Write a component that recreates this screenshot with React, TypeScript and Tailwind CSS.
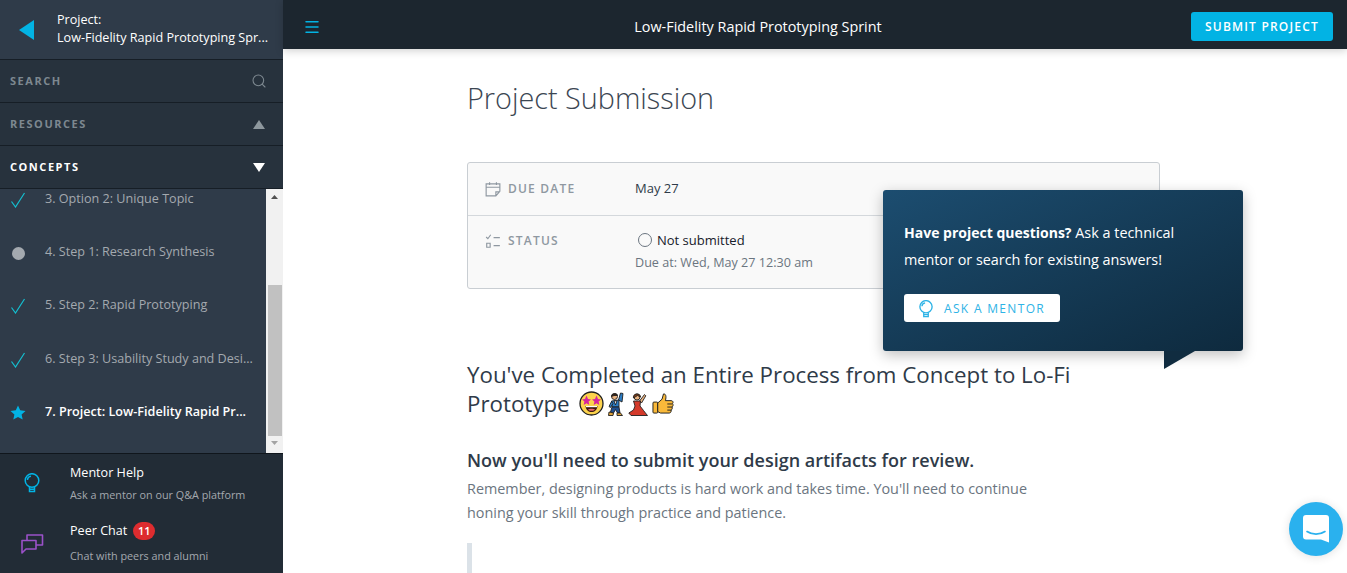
import { Menu, Search } from 'lucide-react';

const font = "font-['Open_Sans',sans-serif]";

const Check = () => (
	<svg width="16" height="16" viewBox="0 0 16 16" fill="none" stroke="#14bfd0" strokeWidth="1.2">
		<path d="M1.5 9.5 L5.5 15 L14.5 1" />
	</svg>
);

const Bulb = ({ color, size }: { color: string; size: number }) => (
	<svg width={size} height={size} viewBox="0 0 20 20" fill="none" stroke={color} strokeWidth="1.5">
		<circle cx="10" cy="7.5" r="6.8" />
		<path d="M7.5 14 V18.5 H12.5 V14 M7.5 16.2 H12.5 M5.5 7 C5.5 5 7 3.5 9 3.2" />
	</svg>
);

const ChatIcon = () => (
	<svg width="24" height="22" viewBox="0 0 24 22" fill="none" stroke="#9b51c9" strokeWidth="1.6" strokeLinejoin="round">
		<path d="M2 7.5 H16 V16 H6 L2 20 Z" />
		<path d="M7 7.5 V2 H22.5 V12 H16" />
	</svg>
);

const Lessons = [
	{ label: '3. Option 2: Unique Topic', state: 'done' },
	{ label: '4. Step 1: Research Synthesis', state: 'open' },
	{ label: '5. Step 2: Rapid Prototyping', state: 'done' },
	{ label: '6. Step 3: Usability Study and Desi...', state: 'done' },
	{ label: '7. Project: Low-Fidelity Rapid Pr...', state: 'current' },
];

const StarEyes = () => (
	<svg width="25" height="25" viewBox="0 0 25 25">
		<circle cx="12.5" cy="12.5" r="11.5" fill="#fcd34d" stroke="#1f1f1f" strokeWidth="1.3" />
		<path d="M7.5 4.5 L9 8 L12 8.6 L9.6 10.6 L10.3 14 L7.5 12.2 L4.7 14 L5.4 10.6 L3 8.6 L6 8 Z" fill="#d6249f" />
		<path d="M17.5 4.5 L19 8 L22 8.6 L19.6 10.6 L20.3 14 L17.5 12.2 L14.7 14 L15.4 10.6 L13 8.6 L16 8 Z" fill="#d6249f" />
		<path d="M6.5 15 H18.5 C18 19 15.5 21 12.5 21 C9.5 21 7 19 6.5 15 Z" fill="#3b1a10" />
		<path d="M9 18.5 C10.5 17.5 14.5 17.5 16 18.5 C15 20.3 10 20.3 9 18.5 Z" fill="#f06a6a" />
		<path d="M7 15 H18 V16.2 H7 Z" fill="#fff" />
	</svg>
);

const ManDancing = () => (
	<svg width="16" height="24" viewBox="0 0 16 24" stroke="#1f1f1f" strokeWidth="0.9">
		<path d="M10.5 8 L12.5 1 L15 1.5 L14 10 Z" fill="#2b7cc4" />
		<path d="M3.5 9 L11 8 L11 15 L4 15 Z" fill="#2b7cc4" />
		<path d="M6 9 L9 8.8 L7.5 13 Z" fill="#fff" />
		<circle cx="6.5" cy="4.5" r="3" fill="#e9b27f" />
		<path d="M3.5 4.5 C3.5 1 9.5 1 9.5 3.5 L6 3.5 Z" fill="#3b2314" />
		<path d="M3.5 9.5 L1 14.5 L2.5 15.5 L5 11.5 Z" fill="#2b7cc4" />
		<path d="M4 15 L11 15 L12 21 L9.5 21 L7.5 17.5 L5.5 21 L2.5 20 Z" fill="#1f4f8f" />
		<path d="M1 20 L5.5 21 L5 23.5 L0.5 23.5 Z" fill="#e0a33a" />
		<path d="M9 21 L12.5 21 L14.5 23.5 L9 23.5 Z" fill="#e0a33a" />
	</svg>
);

const WomanDancing = () => (
	<svg width="20" height="24" viewBox="0 0 20 24" stroke="#1f1f1f" strokeWidth="0.9">
		<circle cx="9" cy="5" r="3" fill="#e9b27f" />
		<path d="M5.5 6 C4.5 1 12.5 0.5 12.5 5 L9.5 3.5 Z" fill="#7a3b16" />
		<path d="M11.5 9 L16.5 2.5 L17.8 3.8 L13.5 11 Z" fill="#e9b27f" />
		<path d="M5.5 9 H12.5 L12 14 C14.5 17 16.5 20 19.5 23.5 H3 L0.8 21 L5.5 18 L7 14 Z" fill="#d43a2a" />
	</svg>
);

const ThumbsUp = () => (
	<svg width="22" height="23" viewBox="0 0 23 23" stroke="#1f1f1f" strokeWidth="1">
		<rect x="1" y="10" width="5" height="11.5" rx="1" fill="#f9b93a" />
		<path d="M6 11 L10.5 7 L12 1.5 C14.5 1.2 15.2 4 14 8.5 H20 C22 8.5 22.5 10.5 21.5 11.5 C22.5 13 22 14.5 21 15 C21.5 16.5 21 18 20 18.3 C20.3 20 19.5 21.5 18 21.5 H9 L6 20 Z" fill="#f9b93a" />
		<path d="M16 12 H21 M16 15.2 H21 M16 18.4 H20" fill="none" />
	</svg>
);

export default function App() {
	return (
		<div className={`${font} relative flex h-[573px] w-[1347px] overflow-hidden bg-white`}>
			<aside className="flex w-[283px] shrink-0 flex-col bg-[#27323d]">
				<div className="flex h-[60px] shrink-0 items-center border-b border-[#161e26] bg-[#2f3b49]">
					<svg className="ml-[19px] shrink-0" width="15" height="20" viewBox="0 0 15 20">
						<path d="M15 0 V20 L0 10 Z" fill="#02b3e4" />
					</svg>
					<div className="ml-[23px] pb-[1px] text-[12.6px] leading-[18px] whitespace-nowrap text-white">
						<div>Project:</div>
						<div>Low-Fidelity Rapid Prototyping Spr...</div>
					</div>
				</div>
				<div className="flex h-[43px] shrink-0 items-center justify-between border-b border-[#161e26] pl-[10px] pr-[16px]">
					<span className="text-[11px] font-bold tracking-[0.14em] text-[#7d8890]">SEARCH</span>
					<Search className="h-[16px] w-[16px] text-[#7d8890]" strokeWidth={1.6} />
				</div>
				<div className="flex h-[43px] shrink-0 items-center justify-between border-b border-[#161e26] pl-[10px] pr-[18px]">
					<span className="text-[11px] font-bold tracking-[0.14em] text-[#7d8890]">RESOURCES</span>
					<svg width="12" height="9" viewBox="0 0 12 9"><path d="M6 0 L12 9 H0 Z" fill="#8d979d" /></svg>
				</div>
				<div className="flex h-[43px] shrink-0 items-center justify-between border-b border-[#161e26] pl-[10px] pr-[18px]">
					<span className="text-[11px] font-bold tracking-[0.14em] text-white">CONCEPTS</span>
					<svg width="12" height="9" viewBox="0 0 12 9"><path d="M0 0 H12 L6 9 Z" fill="#fff" /></svg>
				</div>
				<div className="flex h-[265px] shrink-0 border-b border-[#10161c] bg-[#2f3b49]">
					<ul className="w-[266px] overflow-hidden">
						{Lessons.map((l) => (
							<li key={l.label} className="flex h-[53.2px] items-start">
								<span className="flex h-[22px] w-[45px] shrink-0 items-center justify-center pr-[9px]">
									{l.state === 'done' && <Check />}
									{l.state === 'open' && <span className="h-[13px] w-[13px] rounded-full bg-[#a4a9af]" />}
									{l.state === 'current' && (
										<svg width="16" height="15" viewBox="0 0 16 15">
											<path d="M8 0.5 L10.2 5.3 L15.5 5.9 L11.6 9.4 L12.7 14.6 L8 12 L3.3 14.6 L4.4 9.4 L0.5 5.9 L5.8 5.3 Z" fill="#02b3e4" />
										</svg>
									)}
								</span>
								<span
									className={
										l.state === 'current'
											? 'text-[12.6px] leading-[20px] font-semibold text-white'
											: 'text-[12.6px] leading-[20px] text-[#a4a9af]'
									}
								>
									{l.label}
								</span>
							</li>
						))}
					</ul>
					<div className="flex w-[17px] flex-col items-center bg-[#f1f1f1]">
						<svg className="mt-[6px]" width="7" height="4" viewBox="0 0 7 4"><path d="M3.5 0 L7 4 H0 Z" fill="#505050" /></svg>
						<div className="mt-[86px] h-[151px] w-[14px] bg-[#c1c1c1]" />
						<svg className="mt-[5px]" width="7" height="4" viewBox="0 0 7 4"><path d="M0 0 H7 L3.5 4 Z" fill="#a3a3a3" /></svg>
					</div>
				</div>
				<div className="flex flex-1 flex-col bg-[#222c36]">
					<div className="flex h-[58px] shrink-0">
						<span className="flex w-[70px] shrink-0 items-start justify-center pt-[19px] pr-[6px]">
							<Bulb color="#02b3e4" size={20} />
						</span>
						<div className="pt-[9px]">
							<div className="text-[12.6px] leading-[20px] text-white">Mentor Help</div>
							<div className="mt-[3px] text-[10.8px] leading-[18px] text-[#a4a9af]">Ask a mentor on our Q&amp;A platform</div>
						</div>
					</div>
					<div className="flex flex-1">
						<span className="flex w-[70px] shrink-0 items-start justify-center pt-[21px] pr-[6px]">
							<ChatIcon />
						</span>
						<div className="pt-[9px]">
							<div className="flex items-center gap-[6px] text-[12.6px] leading-[20px] text-white">
								Peer Chat
								<span className="flex h-[18px] w-[22px] items-center justify-center rounded-full bg-[#dd2c2f] text-[11px] font-semibold">11</span>
							</div>
							<div className="mt-[6px] text-[10.8px] leading-[18px] text-[#a4a9af]">Chat with peers and alumni</div>
						</div>
					</div>
				</div>
			</aside>

			<div className="flex min-w-0 flex-1 flex-col">
				<header className="relative z-10 flex h-[49px] shrink-0 items-center bg-[#1c262f] pt-[4px] pl-[20px] pr-[14px] shadow-[0_2px_8px_rgba(0,0,0,0.18)]">
					<Menu className="h-[18px] w-[18px] text-[#02b3e4]" strokeWidth={2} />
					<div className="flex-1 pl-[4px] text-center text-[14.4px] font-medium text-white">
						Low-Fidelity Rapid Prototyping Sprint
					</div>
					<button className="h-[29px] w-[142px] rounded-[3px] bg-[#02b3e4] text-[12px] font-semibold tracking-[0.1em] text-white">
						SUBMIT PROJECT
					</button>
				</header>
				<main className="relative flex-1 overflow-hidden pl-[184px]">
					<div className="w-[693px]">
						<h1 className="mt-[29px] text-[28.8px] leading-[40px] font-light text-[#3b4652]">Project Submission</h1>
						<div className="mt-[44px] rounded-[3px] border border-[#c9ced3] bg-[#f9f9f9]">
							<div className="flex h-[53px] items-center border-b border-[#d4d8dc]">
								<svg className="ml-[17px]" width="16" height="16" viewBox="0 0 14 14" fill="none" stroke="#8f98a1" strokeWidth="1">
									<path d="M1 2.5 H13 V9 L9.5 13 H1 Z M1 5.5 H13 M4 1 V3.5 M10 1 V3.5 M9.5 13 V9.5 H13" />
								</svg>
								<span className="ml-[7px] w-[127px] text-[12px] font-semibold tracking-[0.1em] text-[#8f98a1]">DUE DATE</span>
								<span className="text-[13px] font-medium text-[#2f3b49]">May 27</span>
							</div>
							<div className="flex h-[72px] items-start">
								<svg className="mt-[17px] ml-[17px]" width="16" height="16" viewBox="0 0 14 14" fill="none" stroke="#8f98a1" strokeWidth="1">
									<path d="M1 3.5 L2.5 5 L5 1.5 M7.5 4 H13 M1.5 9 H4.5 V12.5 H1.5 Z M7.5 11 H13" />
								</svg>
								<span className="mt-[16px] ml-[7px] w-[127px] text-[12px] leading-[18px] font-semibold tracking-[0.1em] text-[#8f98a1]">STATUS</span>
								<div className="mt-[14px]">
									<div className="flex items-center pl-[3px] text-[13px] leading-[20px] text-[#17202a]">
										<span className="mr-[5px] h-[14px] w-[14px] rounded-full border-[1.5px] border-[#6b7580]" />
										Not submitted
									</div>
									<div className="mt-[3px] text-[12.6px] leading-[20px] text-[#6b7580]">Due at: Wed, May 27 12:30 am</div>
								</div>
							</div>
						</div>
						<h2 className="mt-[71px] w-[620px] text-[22.3px] leading-[29px] font-medium text-[#2f3b49]">
							You've Completed an Entire Process from Concept to Lo-Fi
							<span className="flex items-center">
								Prototype
								<span className="ml-[9px] flex items-center gap-[4px]">
									<StarEyes />
									<ManDancing />
									<WomanDancing />
									<ThumbsUp />
								</span>
							</span>
						</h2>
						<h3 className="mt-[30px] text-[18px] leading-[24px] font-semibold text-[#2f3b49]">Now you'll need to submit your design artifacts for review.</h3>
						<p className="mt-[5px] w-[570px] text-[14.4px] leading-[24px] text-[#6b7580]">
							Remember, designing products is hard work and takes time. You'll need to continue honing your skill through practice and patience.
						</p>
						<div className="mt-[18px] h-[40px] w-[5px] bg-[#dbe2e8]" />
					</div>

					<div className="absolute top-[141px] left-[600px] z-20 h-[161px] w-[360px] rounded-[3px] bg-gradient-to-br from-[#1c4d70] to-[#0e2a3e] pt-[29px] pl-[21px] shadow-[0_4px_14px_rgba(0,0,0,0.25)]">
						<p className="w-[300px] text-[14.4px] leading-[27px] text-white">
							<b className="text-[14px]">Have project questions?</b> Ask a technical mentor or search for existing answers!
						</p>
						<button className="mt-[21px] flex h-[28px] w-[156px] items-center rounded-[3px] bg-white pt-[1px] pl-[13px] text-[12px] font-medium tracking-[0.11em] text-[#2eb3e6]">
							<Bulb color="#2eb3e6" size={18} />
							<span className="ml-[9px]">ASK A MENTOR</span>
						</button>
						<svg className="absolute top-[161px] left-[281px]" width="32" height="18" viewBox="0 0 32 18">
							<path d="M0 0 H31 L0 18 Z" fill="#102c40" />
						</svg>
					</div>
				</main>
			</div>

			<button className="absolute top-[502px] left-[1289px] flex h-[54px] w-[54px] items-center justify-center rounded-full bg-[#2ab1ee] shadow-[0_1px_10px_rgba(0,0,0,0.12)]">
				<svg width="26" height="28" viewBox="0 0 26 28">
					<path d="M3 0 H23 A3 3 0 0 1 26 3 V27.5 L18 24.5 H3 A3 3 0 0 1 0 21.5 V3 A3 3 0 0 1 3 0 Z" fill="#fff" />
					<path d="M4 16.5 C9 20 17 20 22 16.5" fill="none" stroke="#2ab1ee" strokeWidth="1.6" strokeLinecap="round" />
				</svg>
			</button>
		</div>
	);
}
